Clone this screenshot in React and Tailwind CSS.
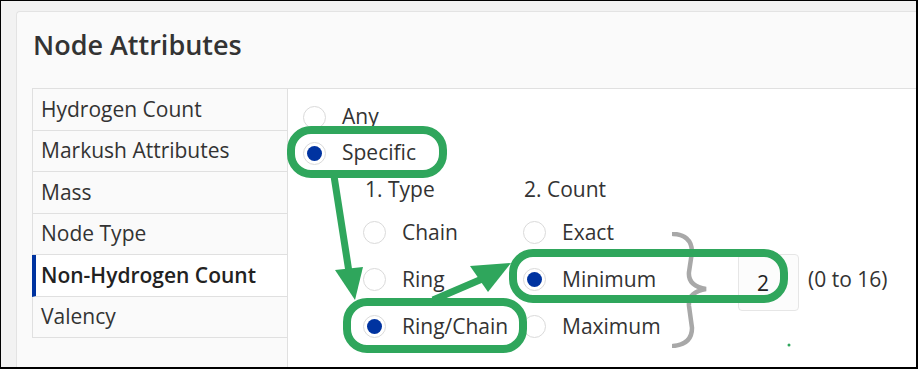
import React from "react";

const menuItems = [
  { label: "Hydrogen Count", h: "h-[41px]" },
  { label: "Markush Attributes", h: "h-[40px]" },
  { label: "Mass", h: "h-[41px]" },
  { label: "Node Type", h: "h-[40px]" },
  { label: "Non-Hydrogen Count", h: "h-[41px]", active: true },
  { label: "Valency", h: "h-[40px]" },
];

const Radio = ({ checked }) => (
  <div className="w-[23px] h-[23px] shrink-0 rounded-full border border-[#dadada] bg-white flex items-center justify-center">
    {checked && <div className="w-[15px] h-[15px] rounded-full bg-[#0033a0]" />}
  </div>
);

const Option = ({ label, checked, rowClass = "h-[47px]" }) => (
  <div className={`flex items-center ${rowClass}`}>
    <Radio checked={checked} />
    <span className="ml-[16px] text-[21px] text-[#333]">{label}</span>
  </div>
);

// green call-outs drawn over the form
const Annotations = () => (
  <svg
    className="absolute top-[-1px] left-[-1px] pointer-events-none"
    width="918"
    height="369"
    viewBox="0 0 918 369"
  >
    <g fill="none" stroke="#2fa65c" strokeWidth="8">
      <rect x="291" y="130" width="152" height="44" rx="20" />
      <rect x="347" y="302" width="176" height="47" rx="20" />
      <rect x="513" y="253" width="271" height="46" rx="20" />
    </g>
    <g stroke="#2fa65c" strokeWidth="7" strokeLinecap="butt">
      <line x1="334" y1="176" x2="349" y2="272" />
      <line x1="433" y1="300" x2="482" y2="279" />
    </g>
    <g fill="#2fa65c">
      <polygon points="335,270 363,267 355,300" />
      <polygon points="470,266 511,263 488,292" />
      <circle cx="789" cy="345" r="1.5" />
    </g>
  </svg>
);

const Brace = () => (
  <svg width="36" height="116" viewBox="0 0 36 116" className="mt-[23px] shrink-0">
    <path
      d="M1,2 C12,2 20,8 20,20 L17,40 C16,50 22,55 34,57 C22,59 16,64 17,74 L20,96 C20,108 12,113 1,114"
      fill="none"
      stroke="#a8a8a8"
      strokeWidth="4.5"
      strokeLinecap="round"
    />
  </svg>
);

const App = () => {
  return (
    <div className="relative w-[918px] h-[369px] overflow-hidden bg-[#f2f2f2] border-t border-l border-r-2 border-b-2 border-black font-['Open_Sans',sans-serif] text-[#333]">
      <div className="mt-[10px] ml-[15px] h-[360px] flex flex-col bg-[#fafafa] border-t border-l border-[#e3e3e3] rounded-tl-[4px]">
        <div className="h-[76px] pl-[16px] pt-[15px]">
          <h1 className="text-[27px] leading-[35px] font-semibold text-[#333]">
            Node Attributes
          </h1>
        </div>

        <div className="ml-[15px] flex flex-1 border-t border-[#e0e0e0]">
          <div className="w-[256px] shrink-0 border-r border-[#e0e0e0]">
            {menuItems.map((item) => (
              <div
                key={item.label}
                className={`${item.h} box-content flex items-center border-b border-[#e0e0e0] text-[21px] ${
                  item.active
                    ? "border-l-4 border-l-[#0033a0] pl-[5px] bg-white font-semibold text-[#222]"
                    : "border-l pl-[8px] bg-[#fafafa]"
                }`}
              >
                {item.label}
              </div>
            ))}
          </div>

          <div className="flex-1 bg-white pl-[15px] pt-[10px]">
            <Option label="Any" rowClass="h-[36px]" />
            <Option label="Specific" checked rowClass="h-[36px]" />

            <div className="ml-[60px] flex">
              <div className="w-[160px]">
                <div className="h-[38px] flex items-center pl-[2px] text-[21px]">1. Type</div>
                <Option label="Chain" />
                <Option label="Ring" />
                <Option label="Ring/Chain" checked />
              </div>

              <div>
                <div className="h-[38px] flex items-center pl-[1px] text-[21px]">2. Count</div>
                <div className="flex items-start">
                  <div className="w-[149px]">
                    <Option label="Exact" />
                    <Option label="Minimum" checked />
                    <Option label="Maximum" />
                  </div>
                  <Brace />
                  <div className="ml-[30px] mt-[45px] w-[61px] h-[57px] shrink-0 flex items-center pl-[18px] pt-[2px] border border-[#e6e6e6] rounded-[4px] bg-[#fcfcfc] text-[21px] text-[#222]">
                    2
                  </div>
                  <div className="ml-[9px] mt-[47px] h-[47px] flex items-center text-[21px] whitespace-nowrap">
                    (0 to 16)
                  </div>
                </div>
              </div>
            </div>
          </div>
        </div>
      </div>
      <Annotations />
    </div>
  );
};

export default App;
